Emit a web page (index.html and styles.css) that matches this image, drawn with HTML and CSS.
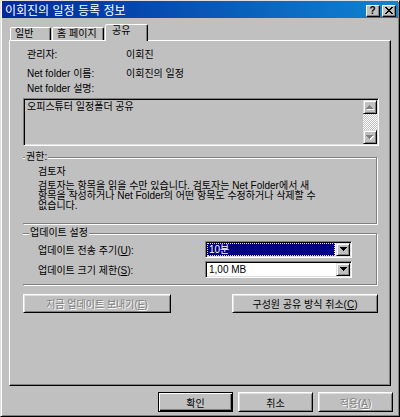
FILE: index.html
```html
<!DOCTYPE html>
<html lang="ko">
<head>
<meta charset="utf-8">
<title>이회진의 일정 등록 정보</title>
<link rel="stylesheet" href="styles.css">
</head>
<body>
<div class="window">
  <div class="titlebar">
    <span class="title">이회진의 일정 등록 정보</span>
    <div class="caption-btns">
      <span class="cbtn">?</span>
      <span class="cbtn"><svg width="8" height="7" viewBox="0 0 8 7"><path d="M0 0h2v1h1v1h2V1h1V0h2v1H7v1H6v1H5v1h1v1h1v1h1v1H6V6H5V5H3v1H2v1H0V6h1V5h1V4h1V3H2V2H1V1H0z" fill="#000"/></svg></span>
    </div>
  </div>
  <div class="tabs">
    <div class="tab t1">일반</div>
    <div class="tab t2">홈 페이지</div>
    <div class="tab t3 active">공유</div>
  </div>
  <div class="panel">
    <div class="info r1"><span class="lbl">관리자:</span><span class="val">이회진</span></div>
    <div class="info r2"><span class="lbl">Net folder 이름:</span><span class="val">이회진의 일정</span></div>
    <div class="info r3"><span class="lbl">Net folder 설명:</span></div>
    <div class="textbox">
      <div class="tb-text">오피스튜터 일정폴더 공유</div>
      <div class="vscroll">
        <div class="sb-btn"><svg width="8" height="5" viewBox="0 0 8 5"><path d="M4 1h1v1h1v1h1v1h1v1H1V4h1V3h1V2h1z" fill="#fff"/><path d="M3 0h1v1h1v1h1v1h1v1H0V3h1V2h1V1h1z" fill="#808080"/></svg></div>
        <div class="sb-track"></div>
        <div class="sb-btn"><svg width="8" height="5" viewBox="0 0 8 5"><path d="M1 1h7v1H7v1H6v1H5v1H4V4H3V3H2V2H1z" fill="#fff"/><path d="M0 0h7v1H6v1H5v1H4v1H3V3H2V2H1V1H0z" fill="#808080"/></svg></div>
      </div>
    </div>
    <div class="group perm">
      <div class="group-title gt1">권한:</div>
      <div class="role">검토자</div>
      <p class="desc">검토자는 항목을 읽을 수만 있습니다. 검토자는 Net Folder에서 새<br>항목을 작성하거나 Net Folder의 어떤 항목도 수정하거나 삭제할 수<br>없습니다.</p>
    </div>
    <div class="group upd">
      <div class="group-title gt2">업데이트 설정</div>
      <div class="setrow">
        <span class="setlbl">업데이트 전송 주기(<u>U</u>):</span>
        <div class="combo">
          <div class="combo-val sel">10분</div>
          <div class="combo-btn"><svg width="7" height="4" viewBox="0 0 7 4"><path d="M0 0h7v1H6v1H5v1H4v1H3V3H2V2H1V1H0z" fill="#000"/></svg></div>
        </div>
      </div>
      <div class="setrow">
        <span class="setlbl">업데이트 크기 제한(<u>S</u>):</span>
        <div class="combo">
          <div class="combo-val">1,00 MB</div>
          <div class="combo-btn"><svg width="7" height="4" viewBox="0 0 7 4"><path d="M0 0h7v1H6v1H5v1H4v1H3V3H2V2H1V1H0z" fill="#000"/></svg></div>
        </div>
      </div>
    </div>
    <div class="actions">
      <button class="btn disabled send">지금 업데이트 보내기(<u>E</u>)</button>
      <button class="btn cancel-share">구성원 공유 방식 취소(<u>C</u>)</button>
    </div>
  </div>
  <div class="footer">
    <button class="btn default">확인</button>
    <button class="btn">취소</button>
    <button class="btn disabled">적용(<u>A</u>)</button>
  </div>
</div>
</body>
</html>
```
FILE: styles.css
```css
* { box-sizing: border-box; }
html, body { margin: 0; padding: 0; }
body {
  background: #c0c0c0;
  font-family: "Liberation Sans", "Noto Sans CJK KR", sans-serif;
  font-size: 10px;
  color: #000;
}
.window {
  width: 400px;
  height: 417px;
  background: #c0c0c0;
  border: 1px solid;
  border-color: #dfdfdf #000 #000 #dfdfdf;
  box-shadow: inset 1px 1px #fff, inset -1px -1px #808080;
  padding: 0 1px 1px 1px;
  display: flex;
  flex-direction: column;
}
.titlebar {
  flex-shrink: 0;
  height: 17px;
  background: linear-gradient(to right, #00289c, #1084d0);
  display: flex;
  align-items: center;
  padding: 0 2px 0 3px;
}
.title {
  flex: 1;
  color: #fff;
  font-family: "Noto Sans CJK KR", sans-serif;
  font-size: 12px;
  line-height: 17px;
  white-space: nowrap;
}
.caption-btns { display: flex; gap: 2px; margin-top: 2px; }
.cbtn {
  width: 14px;
  height: 12px;
  background: #c0c0c0;
  border: 1px solid;
  border-color: #fff #000 #000 #fff;
  box-shadow: inset -1px -1px #808080;
  display: flex;
  align-items: center;
  justify-content: center;
  font: bold 10px/10px "Liberation Sans", sans-serif;
  padding-right: 1px;
}
.tabs {
  flex-shrink: 0;
  display: flex;
  align-items: flex-end;
  height: 22px;
  padding-left: 8px;
  position: relative;
  z-index: 1;
}
.tab {
  height: 13px;
  padding-left: 4px;
  border: 1px solid;
  border-bottom: 0;
  border-color: #fff #000 transparent #fff;
  box-shadow: inset -1px 0 #808080;
  border-top-left-radius: 2px;
  border-top-right-radius: 2px;
  line-height: 11px;
  white-space: nowrap;
  background: #c0c0c0;
}
.t1 { width: 41px; margin-right: 1px; }
.t2 { width: 52px; margin-right: 1px; }
.t3 { width: 43px; }
.tab.active {
  height: 17px;
  margin-bottom: -1px;
  padding-left: 6px;
  line-height: 12px;
}
.panel {
  flex-shrink: 0;
  margin-left: 7px;
  width: 382px;
  height: 346px;
  border: 1px solid;
  border-color: #fff #000 #000 #fff;
  box-shadow: inset -1px -1px #808080;
  padding: 7px 11px 0 13px;
}
.info {
  display: flex;
  margin-left: 4px;
  line-height: 14px;
  white-space: nowrap;
}
.info .lbl { width: 99px; }
.r1 { margin-bottom: 5px; }
.r2 { margin-bottom: 1px; }
.textbox {
  margin-top: 2px;
  height: 48px;
  border: 1px solid;
  border-color: #808080 #fff #fff #808080;
  box-shadow: inset 1px 1px #000, inset -1px -1px #dfdfdf;
  padding: 1px;
  display: flex;
}
.tb-text {
  flex: 1;
  padding: 1px 0 0 2px;
  line-height: 11px;
}
.vscroll {
  width: 14px;
  display: flex;
  flex-direction: column;
}
.sb-btn {
  height: 14px;
  background: #c0c0c0;
  border: 1px solid;
  border-color: #dfdfdf #000 #000 #dfdfdf;
  box-shadow: inset 1px 1px #fff, inset -1px -1px #808080;
  display: flex;
  align-items: center;
  justify-content: center;
}
.sb-track {
  flex: 1;
  background: repeating-conic-gradient(#fff 0 25%, #c0c0c0 0 50%) 0 0 / 2px 2px;
}
.group {
  width: 354px;
  border-top: 1px solid #808080;
  border-right: 1px solid #808080;
  border-bottom: 1px solid #808080;
  box-shadow: 1px 1px 0 #fff, inset 0 1px 0 #fff;
}
.group-title {
  display: table;
  background: #c0c0c0;
  padding: 0 1px;
  line-height: 12px;
  margin-top: -7px;
  white-space: nowrap;
}
.gt1 { margin-left: 2px; }
.gt2 { margin-left: 6px; }
.perm { margin-top: 11px; padding-bottom: 12px; }
.role { margin: 3px 0 0 15px; line-height: 12px; }
.desc {
  margin: 3px 0 0 15px;
  line-height: 10px;
  white-space: nowrap;
}
.upd { margin-top: 9px; padding-bottom: 5px; }
.setrow {
  display: flex;
  align-items: center;
  height: 20px;
  margin-left: 15px;
}
.setrow:first-of-type { margin-top: 2px; }
.setlbl { width: 167px; white-space: nowrap; }
.combo {
  width: 147px;
  height: 17px;
  border: 1px solid;
  border-color: #808080 #fff #fff #808080;
  box-shadow: inset 1px 1px #000, inset -1px -1px #dfdfdf;
  background: #fff;
  padding: 1px;
  display: flex;
}
.combo-val {
  flex: 1;
  line-height: 13px;
  padding-left: 2px;
  white-space: nowrap;
}
.combo-val.sel {
  background: #000080;
  color: #fff;
  outline: 1px dotted #ffff00;
  outline-offset: -1px;
  margin-right: 1px;
  padding-left: 2px;
}
.combo-btn {
  width: 14px;
  background: #c0c0c0;
  border: 1px solid;
  border-color: #dfdfdf #000 #000 #dfdfdf;
  box-shadow: inset 1px 1px #fff, inset -1px -1px #808080;
  display: flex;
  align-items: center;
  justify-content: center;
}
.actions {
  margin-top: 9px;
  display: flex;
  justify-content: space-between;
  margin-right: 1px;
}
.btn {
  font: inherit;
  background: #c0c0c0;
  border: 1px solid;
  border-color: #fff #000 #000 #fff;
  box-shadow: inset 1px 1px #dfdfdf, inset -1px -1px #808080;
  padding: 0;
  margin: 0;
  color: #000;
  height: 20px;
  width: 75px;
  white-space: nowrap;
}
.btn u { text-decoration: underline; }
.send { width: 148px; height: 19px; }
.cancel-share { width: 146px; height: 19px; }
.btn.disabled { color: #808080; text-shadow: 1px 1px 0 #fff; }
.btn.default {
  border-color: #000;
  box-shadow: inset 1px 1px #fff, inset -1px -1px #000, inset -2px -2px #808080;
}
.footer {
  flex-shrink: 0;
  margin-top: 6px;
  display: flex;
  justify-content: flex-end;
  gap: 5px;
  padding-right: 5px;
}
```
